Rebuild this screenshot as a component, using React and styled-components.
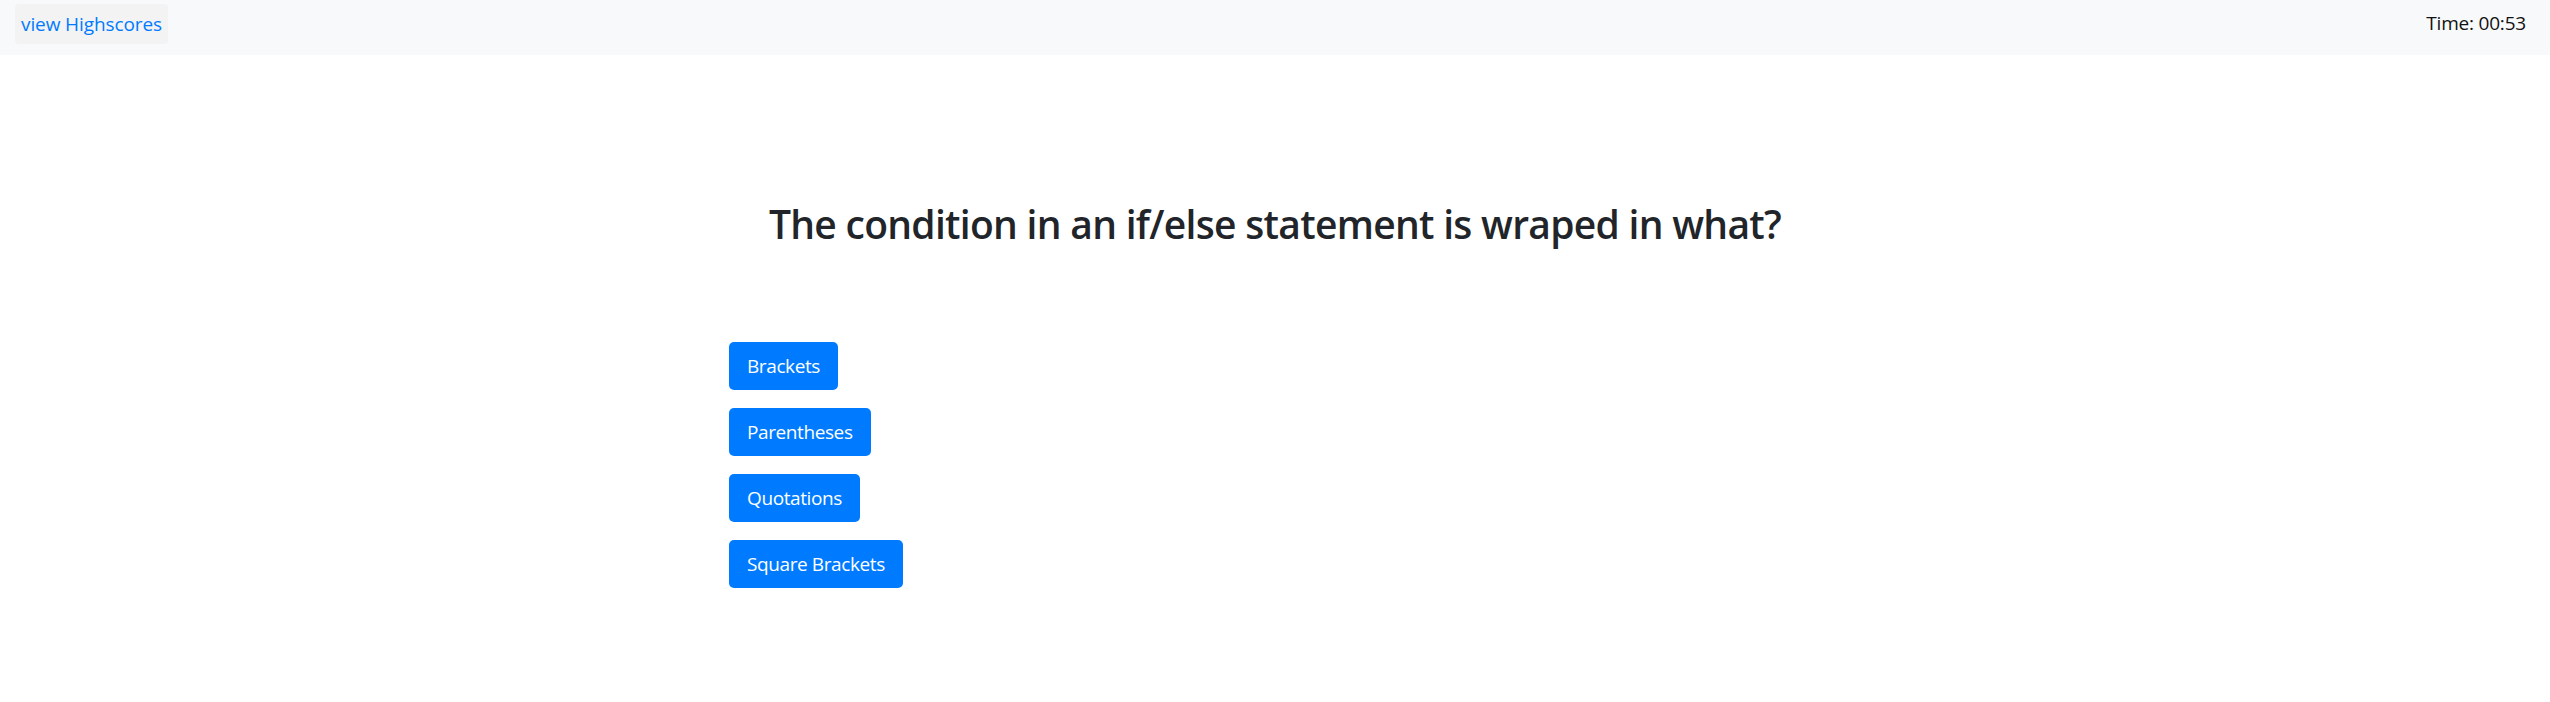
import React from "react";
import styled, { createGlobalStyle } from "styled-components";

const GlobalStyle = createGlobalStyle`
  html, body {
    margin: 0;
    padding: 0;
    background: #fff;
    color: #212529;
    font-family: "Open Sans", "Noto Sans", Arial, sans-serif;
    font-size: 20px;
  }
`;

const Navbar = styled.header`
  display: flex;
  justify-content: space-between;
  align-items: flex-start;
  height: 55px;
  padding: 4px 24px 0 15px;
  box-sizing: border-box;
  background-color: #f8f9fa;
`;

const HighscoresButton = styled.button`
  height: 40px;
  padding: 0 6px;
  border: none;
  border-radius: 4px;
  background-color: #f3f3f3;
  color: #007bff;
  font-family: inherit;
  font-size: 19px;
  letter-spacing: -0.1px;
  cursor: pointer;
`;

const Timer = styled.div`
  padding-top: 6px;
  font-size: 19px;
  letter-spacing: -0.2px;
  color: #111;
`;

const Main = styled.main`
  width: 1092px;
  margin: 0 auto;
  padding-top: 145px;
`;

const Question = styled.h2`
  margin: 0 0 94px;
  text-align: center;
  font-size: 39px;
  font-weight: 600;
  line-height: 48px;
  letter-spacing: -0.7px;
  color: #212529;
`;

const Answers = styled.ul`
  display: flex;
  flex-direction: column;
  align-items: flex-start;
  gap: 18px;
  margin: 0;
  padding: 0;
  list-style: none;
`;

const AnswerButton = styled.button`
  height: 48px;
  padding: 0 18px;
  border: none;
  border-radius: 5px;
  background-color: #007bff;
  color: #fff;
  font-family: inherit;
  font-size: 19px;
  letter-spacing: -0.4px;
  cursor: pointer;
`;

const answers = ["Brackets", "Parentheses", "Quotations", "Square Brackets"];

export default function App() {
  return (
    <>
      <GlobalStyle />
      <Navbar>
        <HighscoresButton>view Highscores</HighscoresButton>
        <Timer>Time: 00:53</Timer>
      </Navbar>
      <Main>
        <Question>The condition in an if/else statement is wraped in what?</Question>
        <Answers>
          {answers.map((a) => (
            <li key={a}>
              <AnswerButton>{a}</AnswerButton>
            </li>
          ))}
        </Answers>
      </Main>
    </>
  );
}
